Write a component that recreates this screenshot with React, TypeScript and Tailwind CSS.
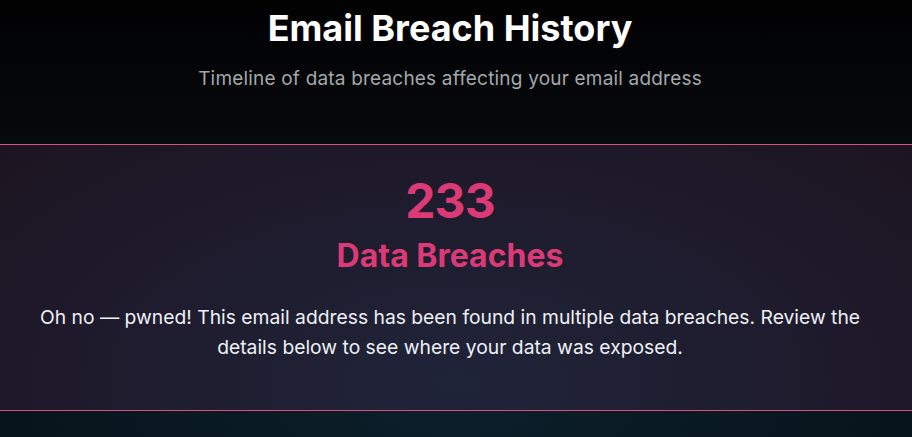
const App = () => {
  return (
    <div
      className="w-full h-[437px] overflow-hidden bg-[#030405] text-white"
      style={{ fontFamily: "Inter, 'Noto Sans', sans-serif" }}
    >
      <header className="flex flex-col items-center pt-2 pr-3 pb-[50px] bg-gradient-to-b from-[#020203] to-[#060a0d]">
        <h1 className="text-4xl font-bold">Email Breach History</h1>
        <p className="mt-[17px] text-[19px] tracking-[0.01em] text-[#a3a8ad]">
          Timeline of data breaches affecting your email address
        </p>
      </header>

      <section className="border-t border-b border-t-[#d9507d] border-b-[#d9507d] bg-[radial-gradient(ellipse_at_50%_90%,#202439_0%,#1e1b2d_55%,#1d1420_100%)] pl-8 pr-11 pt-8 pb-12 text-center">
        <div className="text-[#dc3a76]">
          <div className="text-5xl leading-none font-bold tracking-[-0.02em]">233</div>
          <h2 className="mt-[13px] text-[32px] leading-9 font-bold">Data Breaches</h2>
        </div>
        <p className="mx-auto mt-7 max-w-[840px] text-[19.3px] leading-[30px] text-[#eef0f4]">
          Oh no — pwned! This email address has been found in multiple data breaches. Review the
          details below to see where your data was exposed.
        </p>
      </section>

      <section className="h-40 bg-[radial-gradient(ellipse_at_50%_0%,#0c1f2b_0%,#07141b_70%)]" />
    </div>
  );
};

export default App;
